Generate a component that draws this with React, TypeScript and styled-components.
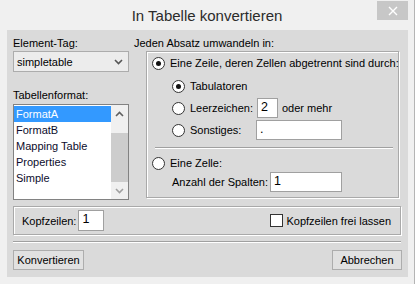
import React from "react";
import styled, { createGlobalStyle } from "styled-components";

const GlobalStyle = createGlobalStyle`
  html, body {
    margin: 0;
    padding: 0;
    background: #f0f0f0;
  }
  body {
    font-family: "Liberation Sans", Arial, sans-serif;
    font-size: 11px;
    color: #000;
  }
`;

const Window = styled.div`
  box-sizing: border-box;
  width: 415px;
  height: 284px;
  background: #f0f0f0;
  border-right: 1px solid #b4b4b4;
  display: flex;
  flex-direction: column;
`;

const TitleBar = styled.div`
  height: 30px;
  display: grid;
  grid-template-columns: 1fr auto 1fr;
  align-items: center;
`;

const Title = styled.div`
  grid-column: 2;
  font-size: 15px;
  color: #2b2b2b;
  padding-top: 1px;
`;

const CloseButton = styled.div`
  grid-column: 3;
  justify-self: end;
  align-self: start;
  margin: 1px 6px 0 0;
  width: 31px;
  height: 19px;
  background: #c7c7c7;
  display: flex;
  align-items: center;
  justify-content: center;
`;

const Client = styled.div`
  flex: 1;
  margin: 0 6px 7px 7px;
  background: #dadada;
  padding: 5px 7px 0 6px;
  display: flex;
  flex-direction: column;
`;

const TopRow = styled.div`
  display: flex;
  gap: 5px;
`;

const LeftCol = styled.div`
  width: 116px;
  display: flex;
  flex-direction: column;
`;

const RightCol = styled.div`
  width: 265px;
  display: flex;
  flex-direction: column;
`;

const Label = styled.div<{ $top?: number }>`
  height: 16px;
  line-height: 16px;
  margin-top: ${(p) => p.$top ?? 0}px;
  white-space: nowrap;
`;

const Select = styled.div`
  box-sizing: border-box;
  height: 21px;
  border: 1px solid #acacac;
  background: #ececec;
  display: flex;
  align-items: center;
  justify-content: space-between;
  padding: 0 5px 0 3px;
`;

const ListBox = styled.div`
  box-sizing: border-box;
  margin-top: 1px;
  height: 96px;
  border: 1px solid #828282;
  background: #fff;
  display: flex;
`;

const Items = styled.div`
  flex: 1;
  padding-top: 1px;
`;

const Item = styled.div<{ $selected?: boolean }>`
  height: 16px;
  line-height: 16px;
  padding-left: 2px;
  background: ${(p) => (p.$selected ? "#3399ff" : "transparent")};
  color: ${(p) => (p.$selected ? "#fff" : "#0c0c2c")};
`;

const ScrollBar = styled.div`
  width: 17px;
  background: #f0f0f0;
  display: flex;
  flex-direction: column;
`;

const ScrollArrow = styled.div`
  height: 17px;
  display: flex;
  align-items: center;
  justify-content: center;
`;

const ScrollTrack = styled.div`
  flex: 1;
  display: flex;
  flex-direction: column;
  padding: 11px 0 0;
`;

const Thumb = styled.div`
  flex: 1;
  background: #cdcdcd;
`;

const GroupBox = styled.div<{ $height?: number }>`
  box-sizing: border-box;
  height: ${(p) => (p.$height ? `${p.$height}px` : "auto")};
  border: 1px solid #a9a9a9;
  box-shadow: inset 1px 1px 0 #fff, 1px 1px 0 #fff;
`;

const OptionBox = styled(GroupBox)`
  margin-left: 12px;
  padding: 3px 0 0 5px;
  display: flex;
  flex-direction: column;
`;

const OptionRow = styled.label<{ $indent?: number; $top?: number }>`
  display: flex;
  align-items: center;
  height: 16px;
  margin-left: ${(p) => p.$indent ?? 0}px;
  margin-top: ${(p) => p.$top ?? 0}px;
  white-space: nowrap;
`;

const FieldRow = styled.div<{ $indent?: number; $top?: number }>`
  display: flex;
  align-items: center;
  height: 20px;
  margin-left: ${(p) => p.$indent ?? 0}px;
  margin-top: ${(p) => p.$top ?? 0}px;
  white-space: nowrap;
`;

const Radio = styled.span<{ $checked?: boolean }>`
  box-sizing: border-box;
  width: 13px;
  height: 13px;
  border-radius: 50%;
  border: 1px solid #333;
  background: #fff;
  margin-right: 5px;
  display: flex;
  align-items: center;
  justify-content: center;
  flex-shrink: 0;
  &::after {
    content: "";
    display: ${(p) => (p.$checked ? "block" : "none")};
    width: 5px;
    height: 5px;
    border-radius: 50%;
    background: #111;
  }
`;

const Check = styled.span`
  box-sizing: border-box;
  width: 13px;
  height: 13px;
  border: 1px solid #333;
  background: #fff;
  margin-right: 3px;
`;

const FieldLabel = styled.span<{ $width?: number }>`
  display: inline-block;
  min-width: ${(p) => (p.$width ? `${p.$width}px` : "0")};
  margin-right: 2px;
`;

const Input = styled.div<{ $width: number; $gap?: number }>`
  box-sizing: border-box;
  width: ${(p) => p.$width}px;
  height: 20px;
  border: 1px solid #a0a0a0;
  background: #fff;
  padding: 0 0 0 3px;
  line-height: 17px;
  font-size: 12.5px;
  margin-left: ${(p) => p.$gap ?? 0}px;
  margin-right: 4px;
`;

const Separator = styled.div<{ $top: number; $left?: number; $right?: number }>`
  height: 1px;
  background: #a0a0a0;
  border-bottom: 1px solid #fff;
  margin: ${(p) => p.$top}px ${(p) => p.$right ?? 0}px 0 ${(p) => p.$left ?? 0}px;
`;

const HeaderBox = styled(GroupBox)`
  margin-top: 6px;
  display: flex;
  align-items: center;
  justify-content: space-between;
  padding: 0 9px 0 8px;
`;

const Inline = styled.div`
  display: flex;
  align-items: center;
`;

const ButtonRow = styled.div`
  margin-top: 7px;
  display: flex;
  justify-content: space-between;
`;

const Button = styled.button<{ $width: number }>`
  box-sizing: border-box;
  width: ${(p) => p.$width}px;
  height: 20px;
  border: 1px solid #adadad;
  background: #e1e1e1;
  font-family: inherit;
  font-size: 11px;
  color: #000;
  padding: 0;
`;

const Chevron = ({ up, color = "#444" }: { up?: boolean; color?: string }) => (
  <svg width="9" height="6" viewBox="0 0 9 6">
    <polyline
      points={up ? "1,5 4.5,1.5 8,5" : "1,1 4.5,4.5 8,1"}
      fill="none"
      stroke={color}
      strokeWidth="1.6"
    />
  </svg>
);

const formats = ["FormatA", "FormatB", "Mapping Table", "Properties", "Simple"];

export default function App() {
  return (
    <>
      <GlobalStyle />
      <Window>
        <TitleBar>
          <Title>In Tabelle konvertieren</Title>
          <CloseButton>
            <svg width="10" height="10" viewBox="0 0 10 10">
              <path d="M1 1 L9 9 M9 1 L1 9" stroke="#fff" strokeWidth="1.4" />
            </svg>
          </CloseButton>
        </TitleBar>
        <Client>
          <TopRow>
            <LeftCol>
              <Label>Element-Tag:</Label>
              <Select>
                <span>simpletable</span>
                <Chevron color="#555" />
              </Select>
              <Label $top={15}>Tabellenformat:</Label>
              <ListBox>
                <Items>
                  {formats.map((f, i) => (
                    <Item key={f} $selected={i === 0}>
                      {f}
                    </Item>
                  ))}
                </Items>
                <ScrollBar>
                  <ScrollArrow>
                    <Chevron up color="#606060" />
                  </ScrollArrow>
                  <ScrollTrack>
                    <Thumb />
                  </ScrollTrack>
                  <ScrollArrow>
                    <Chevron color="#a0a0a0" />
                  </ScrollArrow>
                </ScrollBar>
              </ListBox>
            </LeftCol>
            <RightCol>
              <Label>Jeden Absatz umwandeln in:</Label>
              <OptionBox $height={147}>
                <OptionRow>
                  <Radio $checked />
                  Eine Zeile, deren Zellen abgetrennt sind durch:
                </OptionRow>
                <FieldRow $indent={20} $top={5}>
                  <Radio $checked />
                  Tabulatoren
                </FieldRow>
                <FieldRow $indent={20} $top={2}>
                  <Radio />
                  <FieldLabel $width={62}>Leerzeichen:</FieldLabel>
                  <Input $width={21} $gap={2}>
                    2
                  </Input>
                  oder mehr
                </FieldRow>
                <FieldRow $indent={20} $top={2}>
                  <Radio />
                  <FieldLabel $width={62}>Sonstiges:</FieldLabel>
                  <Input $width={86} $gap={2}>
                    .
                  </Input>
                </FieldRow>
                <Separator $top={7} $left={3} $right={5} />
                <OptionRow $top={6}>
                  <Radio />
                  Eine Zelle:
                </OptionRow>
                <FieldRow $indent={20} $top={1}>
                  <FieldLabel $width={94}>Anzahl der Spalten:</FieldLabel>
                  <Input $width={72}>1</Input>
                </FieldRow>
              </OptionBox>
            </RightCol>
          </TopRow>
          <HeaderBox $height={29}>
            <Inline>
              <FieldLabel $width={53}>Kopfzeilen:</FieldLabel>
              <Input $width={26} style={{ height: 21 }}>
                1
              </Input>
            </Inline>
            <Inline>
              <Check />
              Kopfzeilen frei lassen
            </Inline>
          </HeaderBox>
          <Separator $top={6} />
          <ButtonRow>
            <Button $width={71}>Konvertieren</Button>
            <Button $width={70} style={{ marginRight: -1 }}>
              Abbrechen
            </Button>
          </ButtonRow>
        </Client>
      </Window>
    </>
  );
}
